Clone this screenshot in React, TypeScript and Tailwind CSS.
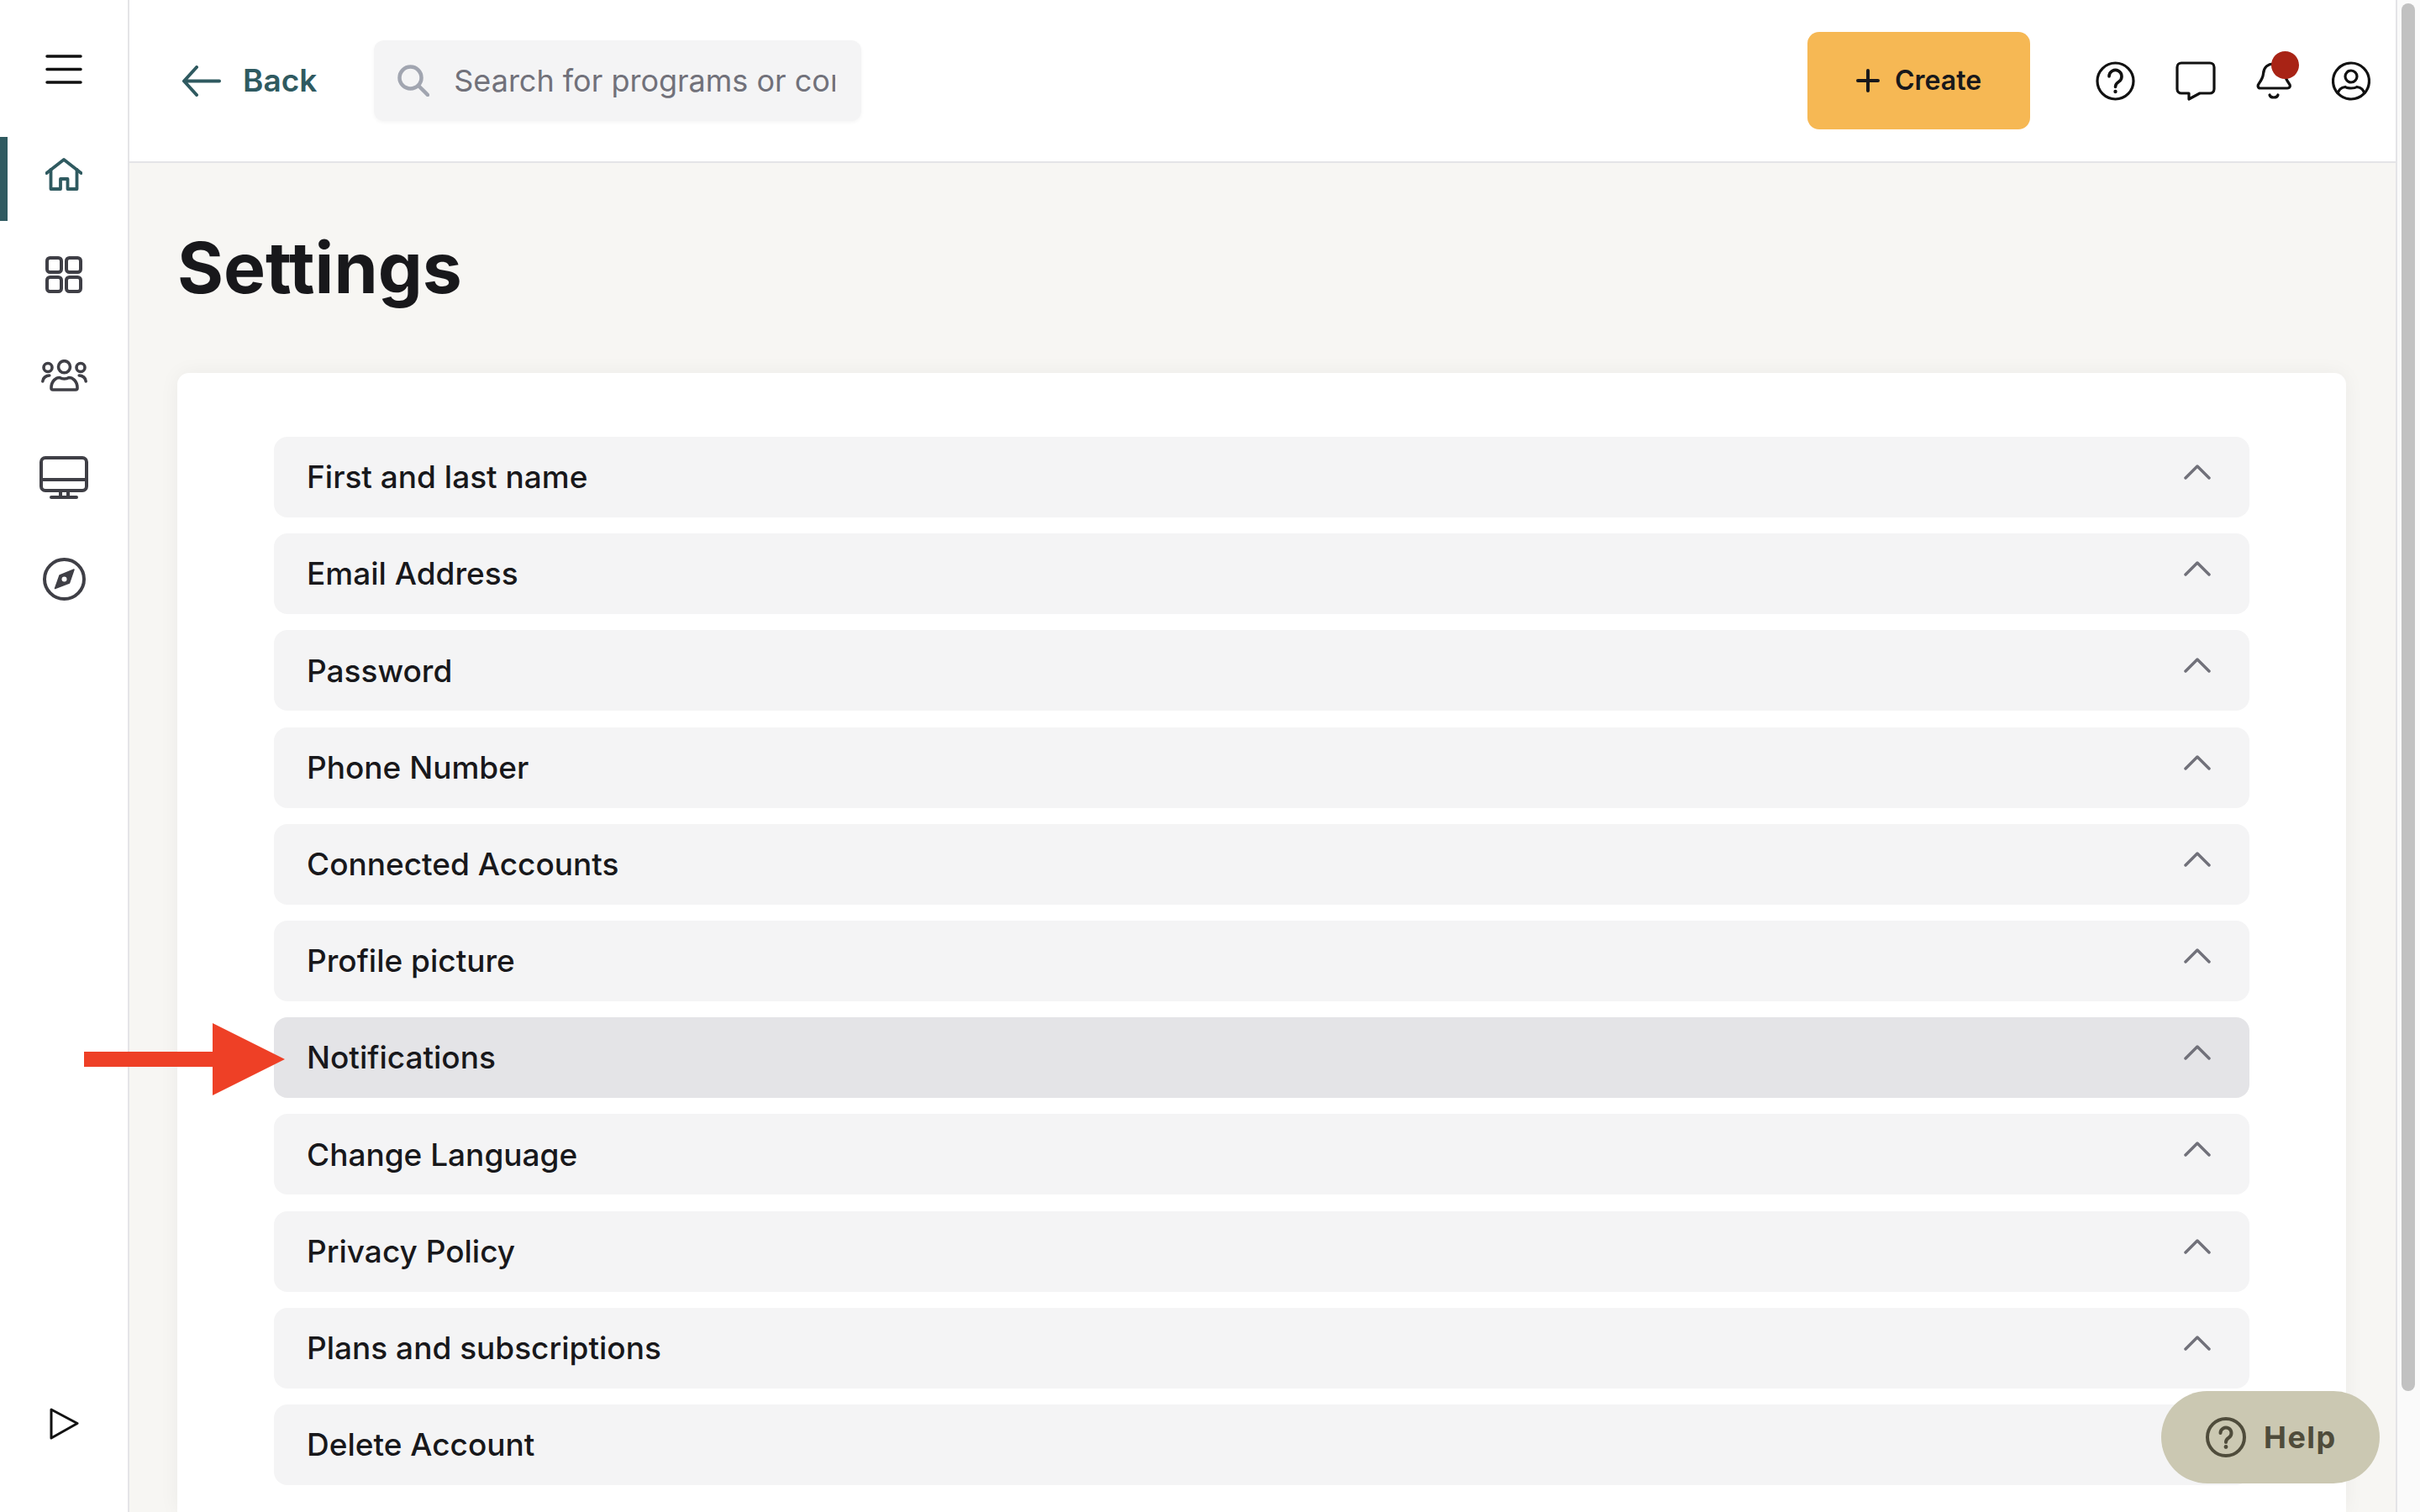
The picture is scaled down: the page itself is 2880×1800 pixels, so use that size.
import React from "react";

const rows = [
  "First and last name",
  "Email Address",
  "Password",
  "Phone Number",
  "Connected Accounts",
  "Profile picture",
  "Notifications",
  "Change Language",
  "Privacy Policy",
  "Plans and subscriptions",
  "Delete Account",
];

const Sidebar = () => (
  <aside className="flex h-full w-[154px] shrink-0 flex-col border-r-2 border-[#e4e4e7] bg-white">
    {/* hamburger */}
    <div className="flex h-[147px] justify-center pt-[65px]">
      <svg width="44" height="35" viewBox="0 0 44 35" fill="none" stroke="#111" strokeWidth="3.5" strokeLinecap="round">
        <path d="M2 2H42M2 17.5H42M2 33H42" />
      </svg>
    </div>

    {/* active item */}
    <div className="relative flex h-[120px] items-center justify-center">
      <div className="absolute left-0 top-[16px] h-[100px] w-[9px] bg-[#2f5a60]" />
      <svg width="44" height="39" viewBox="0 0 44 39" fill="none" stroke="#2f5a60" strokeWidth="3.8" strokeLinecap="round" strokeLinejoin="round">
        <path d="M1.5 18L22 2L42.5 18" />
        <path d="M6.5 14V37H18V25H26.5V37H37.5V14" />
      </svg>
    </div>

    <div className="flex h-[120px] items-center justify-center">
      <svg width="44" height="44" viewBox="0 0 44 44" fill="none" stroke="#3f3f46" strokeWidth="4">
        <rect x="2" y="2" width="17" height="17" rx="3.5" />
        <rect x="25" y="2" width="17" height="17" rx="3.5" />
        <rect x="2" y="25" width="17" height="17" rx="3.5" />
        <rect x="25" y="25" width="17" height="17" rx="3.5" />
      </svg>
    </div>

    <div className="flex h-[120px] items-center justify-center">
      <svg width="55" height="38" viewBox="0 0 55 38" fill="none" stroke="#3f3f46" strokeWidth="3.6" strokeLinecap="round" strokeLinejoin="round">
        <circle cx="27.5" cy="8.7" r="7" />
        <circle cx="8" cy="9.5" r="5" />
        <circle cx="47" cy="9.5" r="5" />
        <path d="M14 36H41a2 2 0 0 0 2-2c0-9-6-12.5-10-12.5c-3 2-8 2-11 0c-4 0-10 3.5-10 12.5a2 2 0 0 0 2 2Z" />
        <path d="M1.8 26c0-4 4-7 8-7M53.2 26c0-4-4-7-8-7" />
      </svg>
    </div>

    <div className="flex h-[122px] items-center justify-center">
      <svg width="58" height="51" viewBox="0 0 58 51" fill="none" stroke="#3f3f46" strokeWidth="4" strokeLinecap="round">
        <rect x="2" y="2" width="54" height="39" rx="5" />
        <path d="M2 28H56M25 41V49M34 41V49M14 49H44" />
      </svg>
    </div>

    <div className="flex h-[120px] items-center justify-center">
      <svg width="51" height="51" viewBox="0 0 51 51" fill="none">
        <circle cx="25.5" cy="25.5" r="23.5" stroke="#3f3f46" strokeWidth="4" />
        <path d="M37 14L31.5 30L14.5 36.5L20 21Z" fill="#3f3f46" stroke="#3f3f46" strokeWidth="1.5" strokeLinejoin="round" />
        <circle cx="25.5" cy="25.5" r="3" fill="#fff" />
      </svg>
    </div>

    <div className="mt-auto flex justify-center pb-[86px]">
      <svg width="35" height="39" viewBox="0 0 35 39" fill="none" stroke="#111" strokeWidth="3" strokeLinejoin="round">
        <path d="M2 3L33 19.5L2 37Z" />
      </svg>
    </div>
  </aside>
);

const Header = () => (
  <header className="flex h-[194px] shrink-0 items-center border-b-2 border-[#e4e4e7] bg-white pl-[62px] pr-[30px]">
    <svg width="47" height="37" viewBox="0 0 47 37" fill="none" stroke="#2f5a60" strokeWidth="4" strokeLinecap="round" strokeLinejoin="round">
      <path d="M45 18.5H3M18 2L3 18.5L18 35" />
    </svg>
    <span className="ml-[26px] text-[37px] font-semibold text-[#2f5a60]">Back</span>

    <div className="ml-[68px] flex h-[96px] w-[580px] items-center rounded-[12px] bg-[#f4f4f5] pl-[28px] shadow-[0_2px_4px_rgba(0,0,0,0.04)]">
      <svg width="38" height="38" viewBox="0 0 38 38" fill="none" stroke="#a1a5b0" strokeWidth="4.5" strokeLinecap="round">
        <circle cx="15.5" cy="15.5" r="13" />
        <path d="M25 25L36 36" />
      </svg>
      <input
        readOnly
        placeholder="Search for programs or content"
        className="ml-[29px] w-[454px] bg-transparent text-[36px] font-normal outline-none placeholder:text-[#71717a]"
      />
    </div>

    <button className="ml-auto flex h-[116px] w-[265px] items-center justify-center gap-[18px] rounded-[14px] bg-[#f6b854] text-[32px] font-semibold text-[#18181b]">
      <svg width="28" height="28" viewBox="0 0 28 28" fill="none" stroke="#18181b" strokeWidth="4" strokeLinecap="round">
        <path d="M14 2V26M2 14H26" />
      </svg>
      Create
    </button>

    <div className="ml-[78px] flex items-center gap-[48px]">
      <svg width="47" height="47" viewBox="0 0 47 47" fill="none" stroke="#111" strokeWidth="3.2" strokeLinecap="round">
        <circle cx="23.5" cy="23.5" r="21.5" />
        <path d="M16 18a7.5 7.5 0 1 1 11.5 6.3c-3 1.9-4 3-4 6.2" strokeWidth="3.6" />
        <circle cx="23.5" cy="36" r="2.2" fill="#111" stroke="none" />
      </svg>

      <svg width="48" height="47" viewBox="0 0 48 47" fill="none" stroke="#111" strokeWidth="3.2" strokeLinejoin="round">
        <path d="M7 2H41a5 5 0 0 1 5 5V33a5 5 0 0 1-5 5H29L16 45V38H7a5 5 0 0 1-5-5V7a5 5 0 0 1 5-5Z" />
      </svg>

      <div className="relative">
        <svg className="block" width="42" height="46" viewBox="0 0 42 46" fill="none" stroke="#111" strokeWidth="3.2" strokeLinecap="round" strokeLinejoin="round">
          <path d="M5 32H37C40.5 32 41 29 39.5 27C36 22 34.5 20 34 15C33.5 7 28 3 21 3C14 3 9 7 8.5 15C8 20 6 22.5 3 27C1.5 29 2 32 5 32Z" />
          <path d="M16 40C17 44 25 44 26 40" />
        </svg>
        <span className="absolute left-[18px] top-[-12px] h-[33px] w-[33px] rounded-full bg-[#a82315]" />
      </div>

      <svg width="46" height="47" viewBox="0 0 46 47" fill="none" stroke="#111" strokeWidth="3.2">
        <circle cx="23" cy="23.5" r="21.5" />
        <circle cx="23" cy="18" r="7" />
        <path d="M7 39C8 33.5 12 31 16 30.5C19 32.5 27 32.5 30 30.5C34 31 38 33.5 39 39" />
      </svg>
    </div>
  </header>
);

const Row = ({ label }: { label: string }) => (
  <div
    className={`flex h-[96px] shrink-0 items-center justify-between rounded-[16px] pl-[39px] pr-[46px] text-[37px] font-medium text-[#18181b] ${
      label === "Notifications" ? "bg-[#e4e4e7]" : "bg-[#f4f4f5]"
    }`}
  >
    <span>{label}</span>
    <svg className="mb-[12px]" width="32" height="18" viewBox="0 0 32 18" fill="none" stroke="#71717a" strokeWidth="3.5" strokeLinecap="round" strokeLinejoin="round">
      <path d="M2 16L16 2L30 16" />
    </svg>
  </div>
);

export default function App() {
  return (
    <div className="relative flex h-[1800px] w-[2880px] overflow-hidden bg-white font-['Inter',sans-serif]">
      <Sidebar />

      <div className="flex h-full min-w-0 flex-1 flex-col bg-[#f7f6f3]">
        <Header />
        <main className="flex min-h-0 flex-1 flex-col pl-[57px] pr-[59px]">
          <h1 className="mb-[65px] mt-[65px] text-[84px] font-bold leading-[120px] text-[#18181b]">Settings</h1>
          <section className="flex flex-1 flex-col gap-[19.2px] rounded-t-[14px] bg-white px-[115px] pt-[76px] shadow-[0_0_24px_rgba(0,0,0,0.05)]">
            {rows.map((r) => (
              <Row key={r} label={r} />
            ))}
          </section>
        </main>
      </div>

      {/* scrollbar */}
      <div className="h-full w-[29px] shrink-0 border-l-2 border-[#e4e4e7] bg-[#fafafa] pl-[5px] pt-[4px]">
        <div className="h-[1652px] w-[16px] rounded-full bg-[#c1c1c1]" />
      </div>

      {/* annotation arrow */}
      <svg className="absolute left-[100px] top-[1218px]" width="239" height="86" viewBox="0 0 239 86">
        <path d="M0 34H153V0L239 43L153 86V52H0Z" fill="#ee4026" />
      </svg>

      {/* help widget */}
      <button className="absolute left-[2572px] top-[1656px] flex h-[110px] w-[260px] items-center gap-[21px] rounded-full bg-[#cbc8b2] pl-[53px] text-[36px] font-bold tracking-[1.5px] text-[#4f4c3b]">
        <svg width="48" height="48" viewBox="0 0 48 48" fill="none" stroke="#4f4c3b" strokeWidth="4" strokeLinecap="round">
          <circle cx="24" cy="24" r="22" />
          <path d="M17.5 19a6.5 6.5 0 1 1 10 5.5c-2.5 1.6-3.5 2.6-3.5 5.5" />
          <circle cx="24" cy="35.5" r="2.4" fill="#4f4c3b" stroke="none" />
        </svg>
        Help
      </button>
    </div>
  );
}
